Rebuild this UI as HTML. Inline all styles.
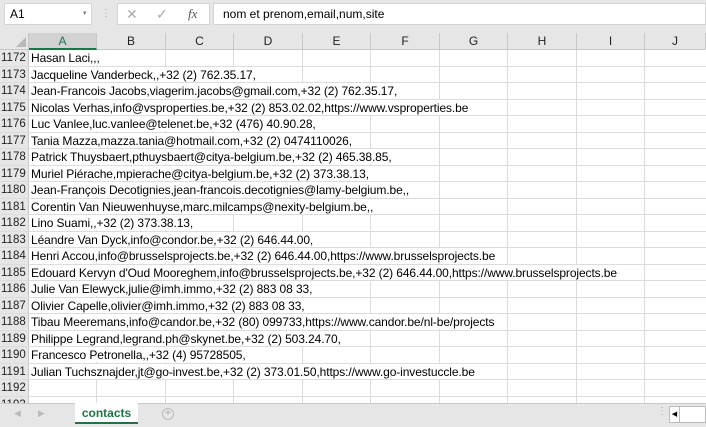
<!DOCTYPE html>
<html><head><style>
*{margin:0;padding:0;box-sizing:border-box}
body{width:706px;height:427px;overflow:hidden;background:#e6e6e6;font-family:"Liberation Sans",sans-serif;position:relative}
.abs{position:absolute}
.box{background:#fff;border:1px solid #d4d4d4}
.hdr{position:absolute;top:33px;height:17px;background:#e6e6e6;border-right:1px solid #c8c8c8;border-bottom:1px solid #c8c8c8;font-size:12px;text-align:center;line-height:17px;color:#222}
.grid{position:absolute;left:0;top:50px;width:706px;height:353px;background:#fff}
.row{position:absolute;left:0;width:706px;height:16.5px;border-bottom:1px solid #dcdcdc}
.rn{position:absolute;left:0;top:0;width:29px;height:100%;background:#e6e6e6;border-right:1px solid #c8c8c8;font-size:11.5px;line-height:16px;padding-left:1px;color:#222}
.tx{position:absolute;left:30px;top:0;height:15px;padding:0 3px 0 1px;background:#fff;font-size:12px;line-height:16px;white-space:nowrap;color:#000;letter-spacing:-0.1px}
.vl{position:absolute;top:0;width:1px;height:353px;background:#dcdcdc}
</style></head><body>
<div class="abs box" style="left:4px;top:3px;width:88px;height:22px;font-size:12px;line-height:20px;padding-left:5px">A1<span style="position:absolute;left:78px;top:0;font-size:7px;color:#777">▾</span></div>
<div class="abs" style="left:101px;top:8px;color:#aaa;font-size:10px">⋮</div>
<div class="abs box" style="left:117px;top:3px;width:93px;height:22px;color:#aaa;font-size:14px;line-height:20px">
<span style="position:absolute;left:8px">✕</span><span style="position:absolute;left:38px">✓</span><span style="position:absolute;left:70px;color:#555;font-family:'Liberation Serif',serif;font-style:italic;font-size:13px">fx</span></div>
<div class="abs box" style="left:213px;top:3px;width:493px;height:22px;font-size:12px;line-height:20px;padding-left:9px">nom et prenom,email,num,site</div>
<div class="hdr" style="left:0;width:29px"><div style="position:absolute;right:2px;bottom:2px;width:0;height:0;border-left:10px solid transparent;border-bottom:10px solid #b8b8b8"></div></div>
<div class="hdr" style="left:29px;width:68px;background:#d2d2d2;color:#217346;border-bottom:2px solid #217346">A</div>
<div class="hdr" style="left:97px;width:69px">B</div>
<div class="hdr" style="left:166px;width:68px">C</div>
<div class="hdr" style="left:234px;width:69px">D</div>
<div class="hdr" style="left:303px;width:68px">E</div>
<div class="hdr" style="left:371px;width:69px">F</div>
<div class="hdr" style="left:440px;width:68px">G</div>
<div class="hdr" style="left:508px;width:69px">H</div>
<div class="hdr" style="left:577px;width:68px">I</div>
<div class="hdr" style="left:645px;width:61px">J</div>
<div class="grid">
<div class="vl" style="left:96px"></div><div class="vl" style="left:165px"></div><div class="vl" style="left:233px"></div><div class="vl" style="left:302px"></div><div class="vl" style="left:370px"></div><div class="vl" style="left:439px"></div><div class="vl" style="left:507px"></div><div class="vl" style="left:576px"></div><div class="vl" style="left:644px"></div>
</div>
<div id="rows" class="abs" style="left:0;top:50px;width:706px;height:353px;overflow:hidden">
<div class="row" style="top:0"><div class="rn">1172</div><div class="tx">Hasan Laci,,,</div></div>
<div class="row" style="top:16.5px"><div class="rn">1173</div><div class="tx">Jacqueline Vanderbeck,,+32 (2) 762.35.17,</div></div>
<div class="row" style="top:33px"><div class="rn">1174</div><div class="tx">Jean-Francois Jacobs,viagerim.jacobs@gmail.com,+32 (2) 762.35.17,</div></div>
<div class="row" style="top:49.5px"><div class="rn">1175</div><div class="tx">Nicolas Verhas,info@vsproperties.be,+32 (2) 853.02.02,https://www.vsproperties.be</div></div>
<div class="row" style="top:66px"><div class="rn">1176</div><div class="tx">Luc Vanlee,luc.vanlee@telenet.be,+32 (476) 40.90.28,</div></div>
<div class="row" style="top:82.5px"><div class="rn">1177</div><div class="tx">Tania Mazza,mazza.tania@hotmail.com,+32 (2) 0474110026,</div></div>
<div class="row" style="top:99px"><div class="rn">1178</div><div class="tx">Patrick Thuysbaert,pthuysbaert@citya-belgium.be,+32 (2) 465.38.85,</div></div>
<div class="row" style="top:115.5px"><div class="rn">1179</div><div class="tx">Muriel Piérache,mpierache@citya-belgium.be,+32 (2) 373.38.13,</div></div>
<div class="row" style="top:132px"><div class="rn">1180</div><div class="tx">Jean-François Decotignies,jean-francois.decotignies@lamy-belgium.be,,</div></div>
<div class="row" style="top:148.5px"><div class="rn">1181</div><div class="tx">Corentin Van Nieuwenhuyse,marc.milcamps@nexity-belgium.be,,</div></div>
<div class="row" style="top:165px"><div class="rn">1182</div><div class="tx">Lino Suami,,+32 (2) 373.38.13,</div></div>
<div class="row" style="top:181.5px"><div class="rn">1183</div><div class="tx">Léandre Van Dyck,info@condor.be,+32 (2) 646.44.00,</div></div>
<div class="row" style="top:198px"><div class="rn">1184</div><div class="tx">Henri Accou,info@brusselsprojects.be,+32 (2) 646.44.00,https://www.brusselsprojects.be</div></div>
<div class="row" style="top:214.5px"><div class="rn">1185</div><div class="tx">Edouard Kervyn d'Oud Mooreghem,info@brusselsprojects.be,+32 (2) 646.44.00,https://www.brusselsprojects.be</div></div>
<div class="row" style="top:231px"><div class="rn">1186</div><div class="tx">Julie Van Elewyck,julie@imh.immo,+32 (2) 883 08 33,</div></div>
<div class="row" style="top:247.5px"><div class="rn">1187</div><div class="tx">Olivier Capelle,olivier@imh.immo,+32 (2) 883 08 33,</div></div>
<div class="row" style="top:264px"><div class="rn">1188</div><div class="tx">Tibau Meeremans,info@candor.be,+32 (80) 099733,https://www.candor.be/nl-be/projects</div></div>
<div class="row" style="top:280.5px"><div class="rn">1189</div><div class="tx">Philippe Legrand,legrand.ph@skynet.be,+32 (2) 503.24.70,</div></div>
<div class="row" style="top:297px"><div class="rn">1190</div><div class="tx">Francesco Petronella,,+32 (4) 95728505,</div></div>
<div class="row" style="top:313.5px"><div class="rn">1191</div><div class="tx">Julian Tuchsznajder,jt@go-invest.be,+32 (2) 373.01.50,https://www.go-investuccle.be</div></div>
<div class="row" style="top:330px"><div class="rn">1192</div></div>
<div class="row" style="top:346.5px"><div class="rn">1193</div></div>
</div>
<div class="abs" style="left:0;top:403px;width:706px;height:24px;background:#e6e6e6;border-top:1px solid #c8c8c8"></div>
<div class="abs" style="left:14px;top:408px;color:#bbb;font-size:9px">◀</div>
<div class="abs" style="left:38px;top:408px;color:#bbb;font-size:9px">▶</div>
<div class="abs" style="left:75px;top:403px;width:63px;height:21px;background:#fff;border-bottom:2px solid #217346;color:#217346;font-weight:bold;font-size:12px;text-align:center;line-height:21px">contacts</div>
<div class="abs" style="left:162px;top:408px;width:12px;height:12px;border:1px solid #bbb;border-radius:50%;color:#aaa;font-size:10px;line-height:10px;text-align:center">+</div>
<div class="abs" style="left:657px;top:406px;color:#aaa;font-size:10px">⋮</div>
<div class="abs" style="left:669px;top:406px;width:37px;height:17px;background:#fff;border:1px solid #bbb"><div style="position:absolute;left:0;top:0;width:10px;height:15px;border-right:1px solid #bbb;font-size:7px;line-height:15px;text-align:center">◀</div></div>
</body></html>
